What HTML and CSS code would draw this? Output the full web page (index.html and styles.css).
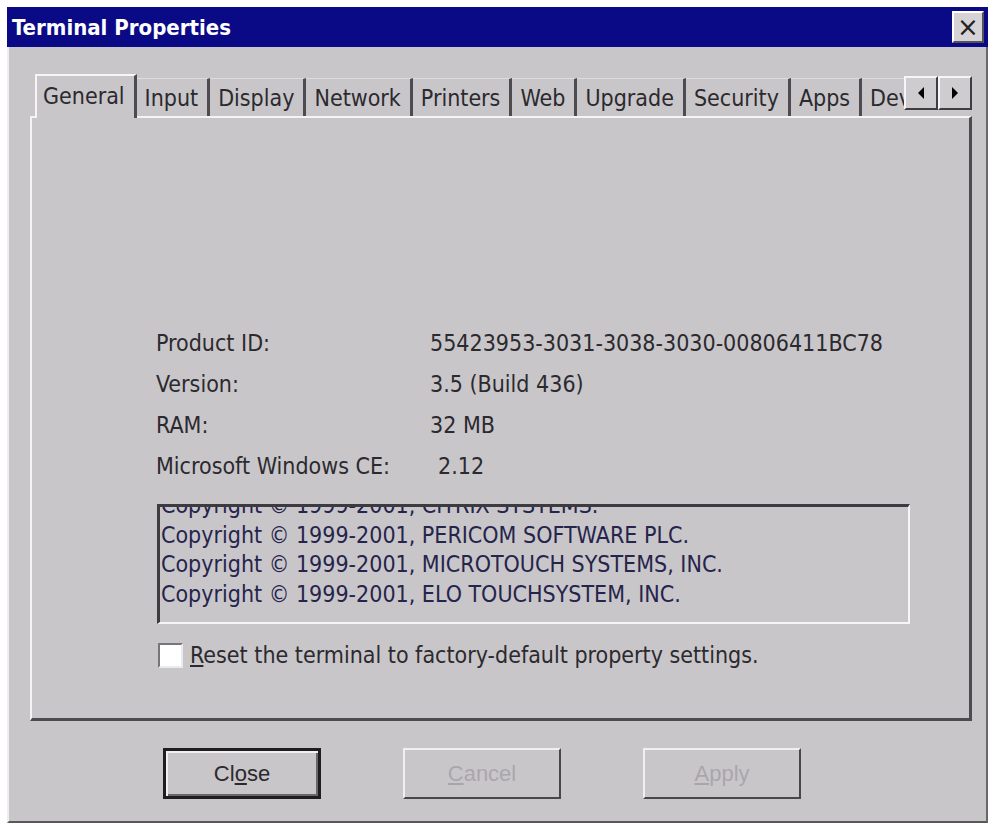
FILE: index.html
```html
<!DOCTYPE html>
<html lang="en">
<head>
  <meta charset="UTF-8">
  <title>Terminal Properties</title>
  <link rel="stylesheet" href="styles.css">
</head>
<body>
  <div class="window">
    <div class="titlebar">
      <span class="title">Terminal Properties</span>
      <button class="close-btn" type="button">&times;</button>
    </div>

    <div class="window-body">
      <div class="tabs">
        <div class="tab-strip">
          <div class="tab active">General</div>
          <div class="tab">Input</div>
          <div class="tab">Display</div>
          <div class="tab">Network</div>
          <div class="tab">Printers</div>
          <div class="tab">Web</div>
          <div class="tab">Upgrade</div>
          <div class="tab">Security</div>
          <div class="tab">Apps</div>
          <div class="tab">Devices</div>
        </div>
        <div class="tab-scroll">
          <button type="button" class="scroll-btn">
            <svg width="8" height="12" viewBox="0 0 8 12"><polygon points="7,0 7,12 1,6" fill="#000"/></svg>
          </button>
          <button type="button" class="scroll-btn">
            <svg width="8" height="12" viewBox="0 0 8 12"><polygon points="1,0 1,12 7,6" fill="#000"/></svg>
          </button>
        </div>
      </div>

      <div class="panel">
        <dl class="info">
          <dt>Product ID:</dt>
          <dd>55423953-3031-3038-3030-00806411BC78</dd>
          <dt>Version:</dt>
          <dd>3.5 (Build 436)</dd>
          <dt>RAM:</dt>
          <dd>32 MB</dd>
          <dt>Microsoft Windows CE:</dt>
          <dd class="indent">2.12</dd>
        </dl>

        <div class="copyright">
          <div class="copyright-text">
            <div>Copyright &copy; 1999-2001, CITRIX SYSTEMS.</div>
            <div>Copyright &copy; 1999-2001, PERICOM SOFTWARE PLC.</div>
            <div>Copyright &copy; 1999-2001, MICROTOUCH SYSTEMS, INC.</div>
            <div>Copyright &copy; 1999-2001, ELO TOUCHSYSTEM, INC.</div>
          </div>
        </div>

        <label class="reset">
          <span class="checkbox"></span>
          <span><u>R</u>eset the terminal to factory-default property settings.</span>
        </label>
      </div>

      <div class="buttons">
        <button type="button" class="btn default">Cl<u>o</u>se</button>
        <button type="button" class="btn" disabled><u>C</u>ancel</button>
        <button type="button" class="btn" disabled><u>A</u>pply</button>
      </div>
    </div>
  </div>
</body>
</html>
```

FILE: styles.css
```css
body {
  margin: 0;
  padding: 7px;
  background: #fff;
  font-family: "DejaVu Sans Condensed", "DejaVu Sans", sans-serif;
  font-size: 23px;
  color: #2b2a2e;
}
.window {
  width: 981px;
  display: flex;
  flex-direction: column;
  background: #c9c6ca;
}
.titlebar {
  height: 40px;
  box-sizing: border-box;
  display: flex;
  align-items: center;
  justify-content: space-between;
  padding: 0 4px 0 5px;
  background: #0a0a86;
}
.title {
  color: #fff;
  font-weight: bold;
  font-size: 22px;
}
.close-btn {
  width: 32px;
  height: 32px;
  padding: 0;
  background: #d6d3d7;
  border: 2px solid;
  border-color: #fff #55525a #55525a #fff;
  font-family: "DejaVu Sans", sans-serif;
  font-size: 26px;
  line-height: 1;
  color: #222;
}
.window-body {
  height: 776px;
  box-sizing: border-box;
  border-left: 2px solid #efeef0;
  border-right: 2px solid #6a676b;
  border-bottom: 2px solid #5a575b;
  padding: 27px 14px 0 21px;
}

/* tabs */
.tabs {
  display: flex;
  align-items: flex-end;
  height: 42px;
  padding-left: 5px;
}
.tab-strip {
  flex: 1;
  min-width: 0;
  display: flex;
  align-items: flex-end;
  overflow: hidden;
  height: 44px;
  margin-bottom: -2px;
  padding-bottom: 2px;
  box-sizing: border-box;
}
.tab {
  flex: none;
  height: 38px;
  box-sizing: border-box;
  display: flex;
  align-items: center;
  padding: 0 9px 0 8px;
  border-top: 1px solid #dedce0;
  border-right: 3px solid #4e4b50;
  white-space: nowrap;
}
.tab.active {
  height: 44px;
  margin-bottom: -2px;
  padding: 0 9px 2px 6px;
  border-top: 2px solid #f6f5f7;
  border-left: 2px solid #f6f5f7;
  background: #c9c6ca;
  position: relative;
  z-index: 1;
}
.tab-scroll {
  align-self: flex-start;
  margin-top: 2px;
  display: flex;
}
.scroll-btn {
  width: 34px;
  height: 34px;
  padding: 0;
  display: flex;
  align-items: center;
  justify-content: center;
  background: #cfcccf;
  border: 2px solid;
  border-color: #f6f5f7 #3f3d41 #3f3d41 #f6f5f7;
}

/* panel */
.panel {
  height: 605px;
  box-sizing: border-box;
  border-top: 2px solid #f4f3f5;
  border-left: 2px solid #f4f3f5;
  border-right: 3px solid #4e4b50;
  border-bottom: 3px solid #4e4b50;
  padding: 204px 0 0 124px;
}
.info {
  display: grid;
  grid-template-columns: 274px auto;
  grid-auto-rows: 41px;
  align-items: center;
  margin: 0;
}
.info dt, .info dd {
  margin: 0;
}
.info .indent {
  padding-left: 8px;
}
.copyright {
  width: 753px;
  height: 120px;
  box-sizing: border-box;
  margin: 18px 0 0 1px;
  padding-left: 1px;
  border-top: 3px solid #3d3b3f;
  border-left: 3px solid #3d3b3f;
  border-right: 2px solid #f6f5f7;
  border-bottom: 2px solid #f6f5f7;
  overflow: hidden;
  color: #25244c;
  line-height: 29.5px;
  white-space: nowrap;
}
.copyright-text {
  margin-top: -16px;
}
.reset {
  display: flex;
  align-items: center;
  gap: 7px;
  margin: 18px 0 0 2px;
}
.checkbox {
  width: 25px;
  height: 25px;
  box-sizing: border-box;
  background: #fff;
  border: 2px solid;
  border-color: #77747a #ebeaec #ebeaec #77747a;
}

/* bottom buttons */
.buttons {
  display: flex;
  gap: 82px;
  margin-top: 27px;
  padding-left: 133px;
}
.btn {
  width: 158px;
  height: 51px;
  box-sizing: border-box;
  background: #c9c6ca;
  border: 2px solid;
  border-color: #f0eff1 #4a474b #4a474b #f0eff1;
  font-family: "Liberation Sans", Arial, sans-serif;
  font-size: 22px;
  color: #2b2a2e;
}
.btn.default {
  border: 3px solid #1e1d20;
  box-shadow: inset 2px 2px 0 #f0eff1, inset -2px -2px 0 #6a676b;
}
.btn:disabled {
  color: #a9a6aa;
}
```
